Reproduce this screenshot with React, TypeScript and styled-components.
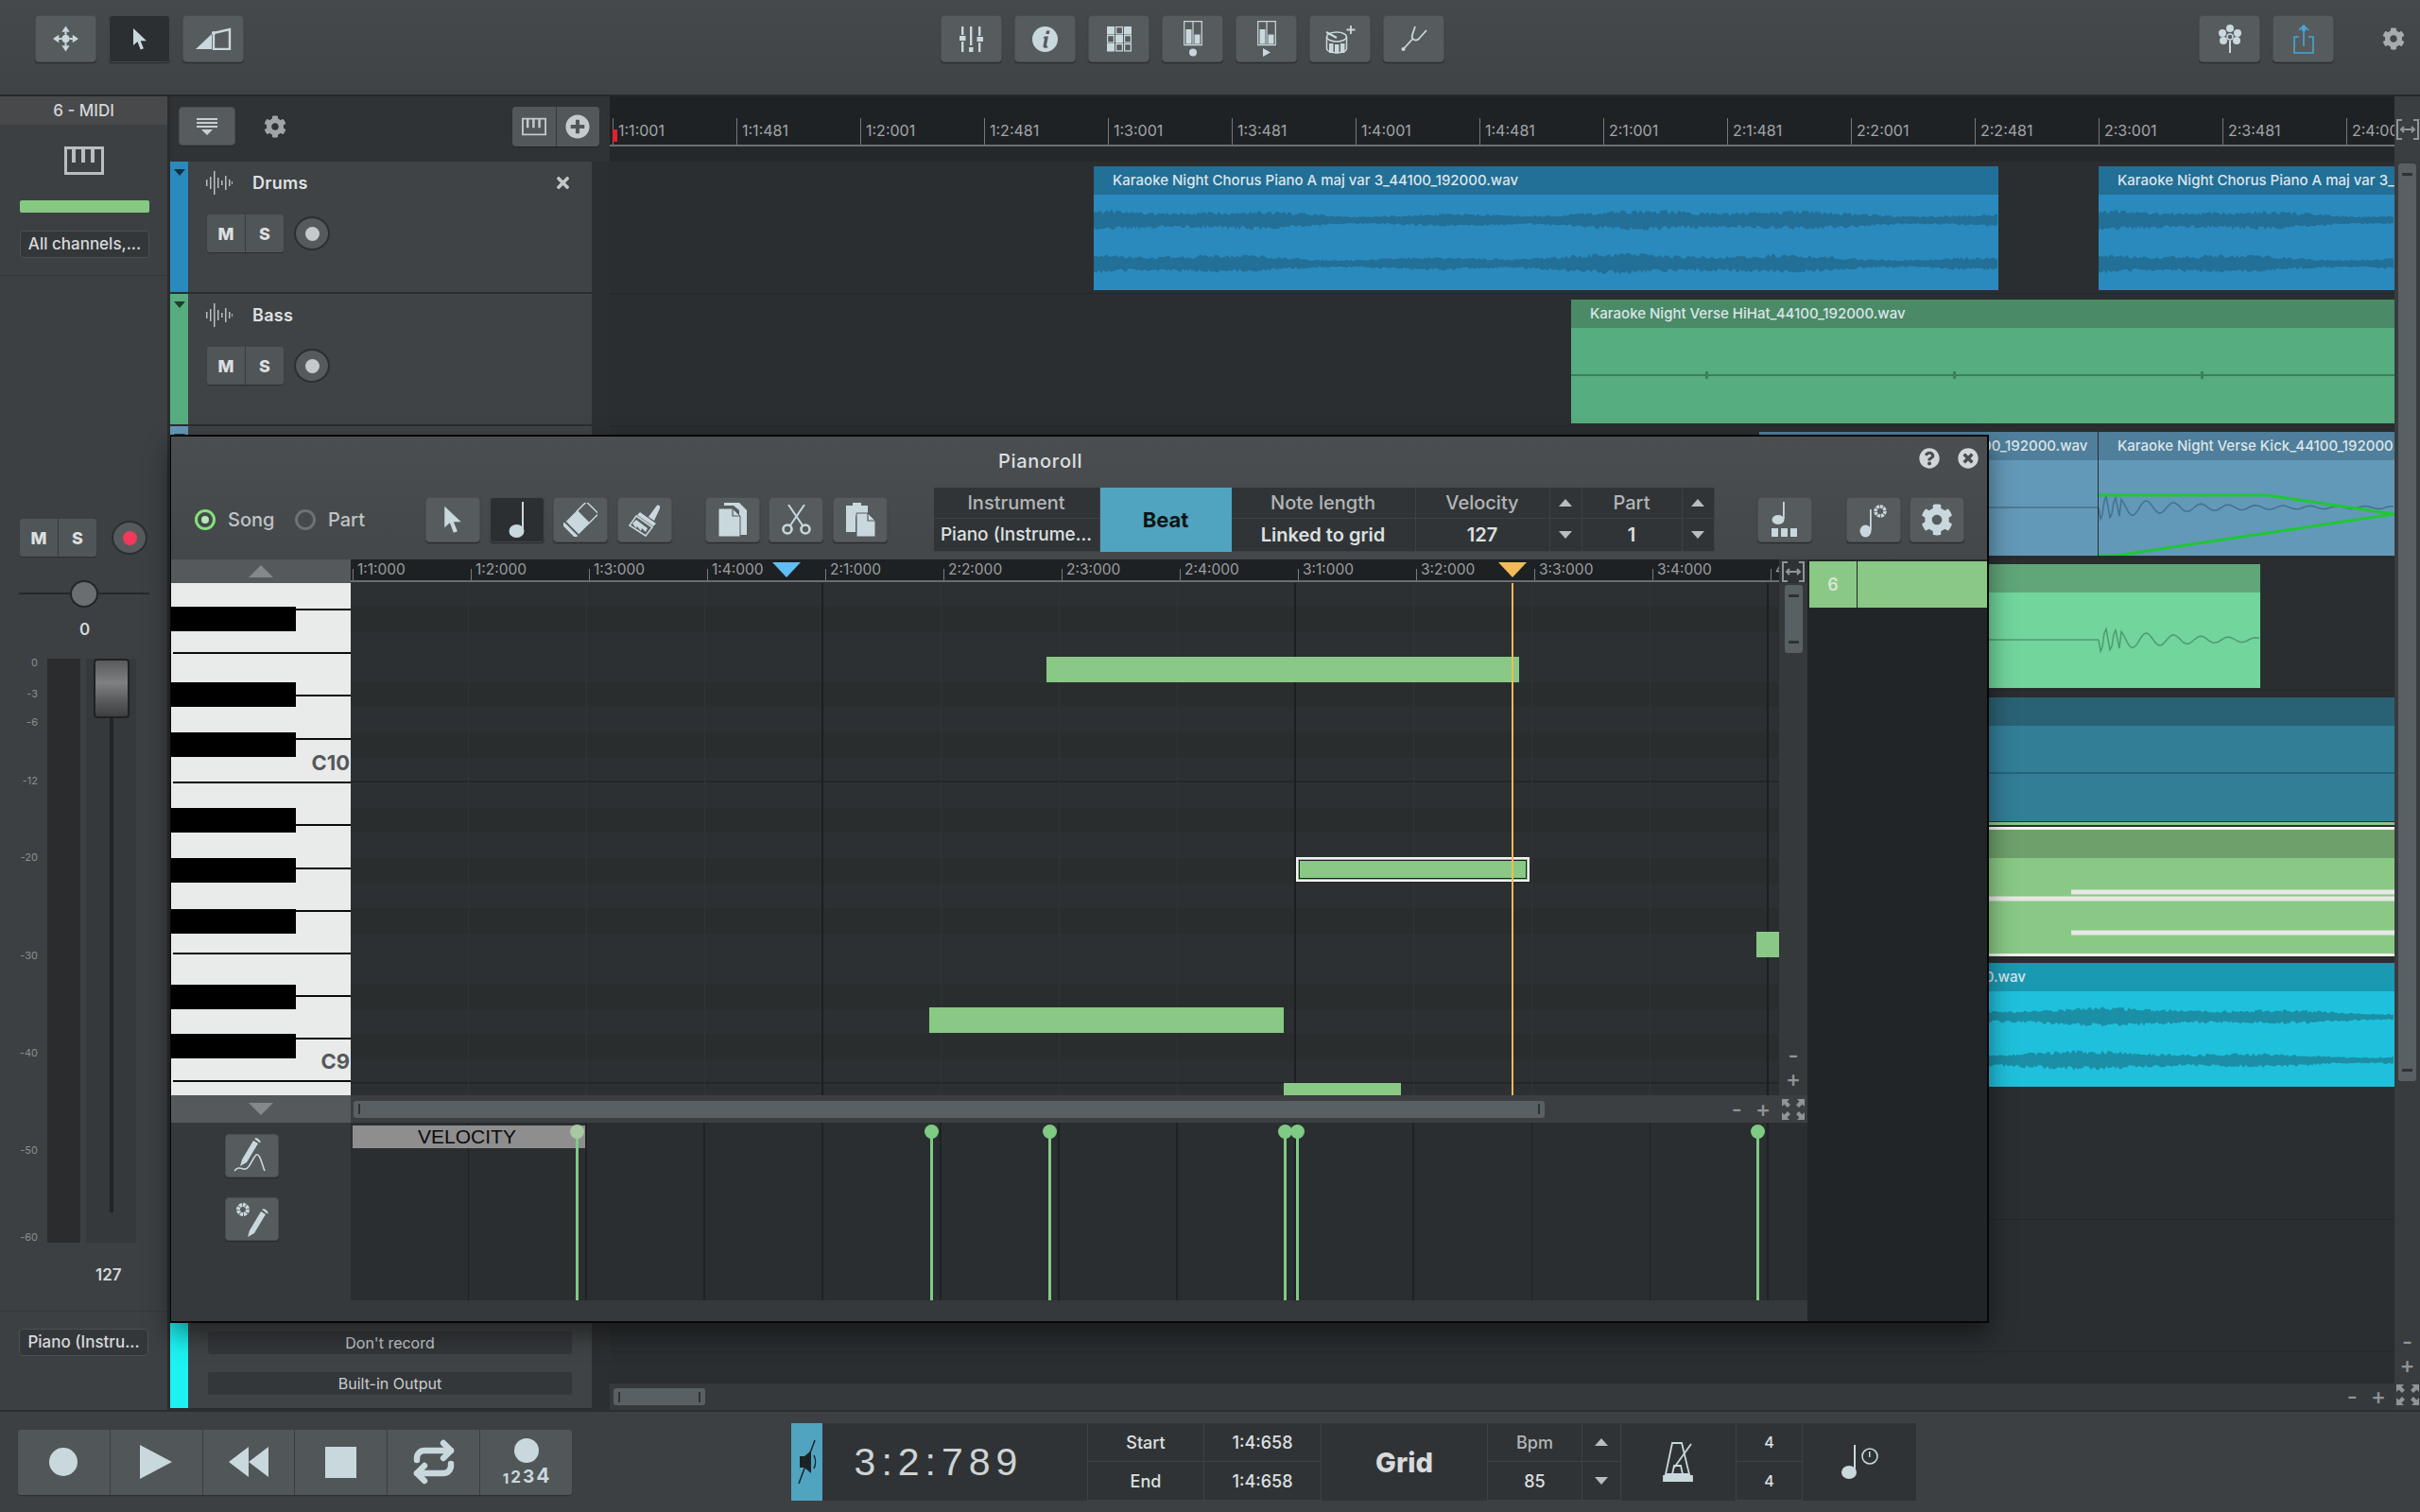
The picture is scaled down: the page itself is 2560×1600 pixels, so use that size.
import styled, { createGlobalStyle } from "styled-components";
import { FaCog, FaPlusCircle, FaQuestionCircle, FaTimes, FaTimesCircle } from "react-icons/fa";
import { Repeat } from "lucide-react";

const GlobalStyle = createGlobalStyle`
  html, body { margin: 0; padding: 0; background: #3c4042; }
  * { box-sizing: border-box; }
`;

const ICON = "#c9d8dd";

const Page = styled.div`
  width: 2560px;
  height: 1600px;
  position: relative;
  display: flex;
  flex-direction: column;
  overflow: hidden;
  background: #3c4042;
  font-family: Inter, "Open Sans", sans-serif;
  color: #d6d9da;
`;

/* ---------- top toolbar ---------- */
const TopBar = styled.div`
  height: 102px;
  flex: none;
  display: flex;
  align-items: flex-start;
  padding: 16px 0 0 37px;
  background: linear-gradient(#45494b, #3f4345);
  border-bottom: 2px solid #26292b;
`;
const ToolGroup = styled.div<{ $left?: number }>`
  display: flex;
  gap: 13px;
  margin-left: ${(p) => p.$left ?? 0}px;
`;
const ToolButton = styled.div<{ $active?: boolean; $w?: number; $h?: number }>`
  width: ${(p) => p.$w ?? 65}px;
  height: ${(p) => p.$h ?? 50}px;
  flex: none;
  display: flex;
  align-items: center;
  justify-content: center;
  border-radius: 4px;
  color: ${ICON};
  background: ${(p) => (p.$active ? "#2b2f31" : "#565b5d")};
  border: 1px solid ${(p) => (p.$active ? "#45494b" : "#4a4e50")};
  box-shadow: 0 1px 1px #26292b;
`;
const TopGear = styled.div`
  margin-left: 51px;
  margin-top: 13px;
  color: #a6abad;
  display: flex;
`;

/* ---------- middle ---------- */
const Middle = styled.div`
  flex: 1;
  display: flex;
  min-height: 0;
`;

const MidiStrip = styled.div`
  width: 180px;
  flex: none;
  display: flex;
  flex-direction: column;
  background: #3c4043;
  border-right: 3px solid #2a2d2f;
`;
const StripName = styled.div`
  height: 30px;
  flex: none;
  background: #47494b;
  font-size: 17px;
  font-weight: 500;
  line-height: 30px;
  text-align: center;
  color: #d4d6d7;
`;
const StripTop = styled.div`
  height: 160px;
  flex: none;
  display: flex;
  flex-direction: column;
  align-items: center;
  padding-top: 23px;
  border-bottom: 1px solid #35383a;
  color: #b9bfc1;
`;
const LevelBar = styled.div`
  width: 137px;
  height: 13px;
  margin-top: 27px;
  margin-left: 2px;
  border-radius: 2px;
  background: #86c982;
`;
const SelectBox = styled.div<{ $top?: number }>`
  width: 137px;
  height: 29px;
  margin-top: ${(p) => p.$top ?? 0}px;
  margin-left: 2px;
  flex: none;
  border: 1px solid #4c5052;
  border-radius: 4px;
  background: #34373a;
  font-size: 17px;
  font-weight: 500;
  line-height: 26px;
  text-align: center;
  white-space: nowrap;
  color: #d8dadb;
`;
const StripMixer = styled.div`
  flex: 1;
  display: flex;
  flex-direction: column;
  padding-top: 257px;
`;
const MixerButtons = styled.div`
  display: flex;
  align-items: center;
  padding-left: 21px;
  gap: 16px;
`;
const MsPair = styled.div<{ $w: number; $h: number }>`
  display: flex;
  flex: none;
  width: ${(p) => p.$w}px;
  height: ${(p) => p.$h}px;
  border-radius: 3px;
  overflow: hidden;
  background: #505557;
  box-shadow: 0 1px 1px #2b2e30;
`;
const MsKey = styled.div`
  flex: 1;
  display: flex;
  align-items: center;
  justify-content: center;
  font-size: 18px;
  font-weight: 800;
  color: #dcdfe0;
  & + & {
    border-left: 1px solid #393c3e;
  }
`;
const RecButton = styled.div<{ $on?: boolean }>`
  width: 38px;
  height: 36px;
  flex: none;
  border-radius: 50%;
  border: 2px solid #2c2f31;
  background: #565a5d;
  display: flex;
  align-items: center;
  justify-content: center;
  &::after {
    content: "";
    width: 15px;
    height: 15px;
    border-radius: 50%;
    background: ${(p) => (p.$on ? "#f0395c" : "#c5c9cb")};
  }
`;
const PanRow = styled.div`
  height: 2px;
  margin: 38px 19px 0 20px;
  background: #26292b;
  display: flex;
  justify-content: center;
  align-items: center;
`;
const PanKnob = styled.div`
  width: 30px;
  height: 29px;
  flex: none;
  border-radius: 50%;
  background: #6b6e70;
  border: 2px solid #232628;
`;
const StripValue = styled.div<{ $top: number; $left: number }>`
  margin-top: ${(p) => p.$top}px;
  padding-left: ${(p) => p.$left}px;
  font-size: 17px;
  font-weight: 600;
  color: #d6d9da;
`;
const FaderArea = styled.div`
  height: 618px;
  flex: none;
  margin-top: 21px;
  display: flex;
`;
const Scale = styled.div`
  width: 50px;
  position: relative;
  flex: none;
`;
const ScaleMark = styled.span<{ $y: number }>`
  position: absolute;
  right: 10px;
  top: ${(p) => p.$y}px;
  font-size: 11px;
  line-height: 12px;
  color: #8b8f91;
`;
const Meter = styled.div`
  width: 35px;
  background: #2a2c2e;
  flex: none;
`;
const FaderTrack = styled.div`
  width: 53px;
  margin-left: 6px;
  position: relative;
  flex: none;
  background: #36393b;
  display: flex;
  justify-content: center;
`;
const FaderRail = styled.div`
  width: 4px;
  height: 586px;
  background: #212426;
`;
const FaderKnob = styled.div`
  position: absolute;
  top: 0;
  left: 8px;
  width: 38px;
  height: 63px;
  border: 2px solid #1f2224;
  border-radius: 4px;
  background: linear-gradient(#585a5c, #7e8082 40%, #5b5d5f 70%, #3d3f41);
`;
const StripFoot = styled.div`
  height: 105px;
  flex: none;
  padding: 18px 0 0 18px;
  border-top: 1px solid #35383a;
`;

/* track headers */
const TrackColumn = styled.div`
  width: 465px;
  flex: none;
  display: flex;
  flex-direction: column;
  background: #2c2f31;
`;
const HeadTools = styled.div`
  height: 69px;
  flex: none;
  display: flex;
  align-items: center;
  padding: 0 11px 6px 9px;
  background: #303335;
  color: #9fa4a6;
`;
const HeadGear = styled.div`
  margin-left: 30px;
  display: flex;
`;
const Segmented = styled.div`
  margin-left: auto;
  display: flex;
  width: 92px;
  height: 42px;
  border-radius: 4px;
  overflow: hidden;
  background: #525759;
  color: #c4cbcd;
  box-shadow: 0 1px 1px #222527;
`;
const SegmentedCell = styled.div`
  flex: 1;
  display: flex;
  align-items: center;
  justify-content: center;
  & + & {
    border-left: 1px solid #34373a;
  }
`;
const TrackRow = styled.div<{ $h?: number }>`
  height: ${(p) => p.$h ?? 140}px;
  flex: ${(p) => (p.$h ? "none" : "1")};
  width: 446px;
  display: flex;
  border-bottom: 2px solid #2a2d2f;
`;
const Stripe = styled.div<{ $color: string }>`
  width: 19px;
  flex: none;
  background: ${(p) => p.$color};
  display: flex;
  justify-content: center;
  padding-top: 8px;
  &::before {
    content: "";
    width: 0;
    height: 0;
    border-left: 6px solid transparent;
    border-right: 6px solid transparent;
    border-top: 7px solid rgba(0, 0, 0, 0.65);
  }
`;
const TrackBody = styled.div`
  flex: 1;
  background: #3f4345;
  padding: 10px 0 0 19px;
  display: flex;
  flex-direction: column;
`;
const TrackTitle = styled.div`
  height: 24px;
  display: flex;
  align-items: center;
  color: #b9bdbf;
`;
const TrackName = styled.div`
  margin-left: 21px;
  font-size: 18px;
  font-weight: 600;
  letter-spacing: 0.3px;
  color: #dfe1e2;
`;
const TrackClose = styled.div`
  margin-left: auto;
  margin-right: 21px;
  display: flex;
  color: #c3c7c8;
`;
const TrackControls = styled.div`
  display: flex;
  align-items: center;
  gap: 11px;
  margin: 22px 0 0 1px;
`;
const LastTrackBody = styled.div`
  flex: 1;
  background: #3f4345;
  padding: 0 21px 14px;
  display: flex;
  flex-direction: column;
  justify-content: flex-end;
  gap: 19px;
`;
const RouteBox = styled.div`
  height: 24px;
  border-radius: 3px;
  background: #34373a;
  font-size: 16px;
  line-height: 24px;
  text-align: center;
  color: #c9cccd;
`;

/* timeline */
const TimelineColumn = styled.div`
  width: 1888px;
  flex: none;
  display: flex;
  flex-direction: column;
`;
const Ruler = styled.div`
  height: 69px;
  flex: none;
  position: relative;
  background: linear-gradient(#1f2225 0 51px, #6d7072 51px 53px, #25282a 53px);
  overflow: hidden;
`;
const RulerTick = styled.div<{ $x: number }>`
  position: absolute;
  left: ${(p) => p.$x}px;
  top: 23px;
  height: 28px;
  width: 1px;
  background: #74787a;
`;
const RulerLabel = styled.span`
  position: absolute;
  left: 6px;
  top: 4px;
  font-size: 16px;
  line-height: 18px;
  white-space: nowrap;
  color: #a2a6a8;
`;
const PlayMark = styled.div`
  position: absolute;
  left: 3px;
  top: 35px;
  width: 5px;
  height: 13px;
  background: #e4202c;
`;
const Lanes = styled.div`
  flex: 1;
  position: relative;
  overflow: hidden;
  background: repeating-linear-gradient(#2a2e30 0 139px, #25282a 139px 140px);
`;
const Clip = styled.div<{ $x: number; $y: number; $w: number; $h?: number; $body: string }>`
  position: absolute;
  left: ${(p) => p.$x}px;
  top: ${(p) => p.$y}px;
  width: ${(p) => p.$w}px;
  height: ${(p) => p.$h ?? 131}px;
  display: flex;
  flex-direction: column;
  overflow: hidden;
  background: ${(p) => p.$body};
`;
const ClipHead = styled.div<{ $color: string; $pad?: number }>`
  height: 30px;
  flex: none;
  padding-left: ${(p) => p.$pad ?? 20}px;
  background: ${(p) => p.$color};
  font-size: 15px;
  font-weight: 500;
  line-height: 29px;
  white-space: nowrap;
  color: #dbe5ea;
`;
const ClipEdge = styled.div`
  height: 8px;
  flex: none;
  background: linear-gradient(#89c985 0 3px, #2a2e30 3px 5px, #f4f5f3 5px);
`;
const ClipArt = styled.svg`
  flex: 1;
  display: block;
  width: 100%;
`;
const HScroll = styled.div`
  height: 29px;
  flex: none;
  display: flex;
  align-items: center;
  padding: 0 9px 0 4px;
  background: #35393b;
  border-top: 1px solid #282b2d;
  color: #8f9496;
`;
const HThumb = styled.div<{ $w: number }>`
  width: ${(p) => p.$w}px;
  height: 18px;
  flex: none;
  display: flex;
  justify-content: space-between;
  align-items: center;
  padding: 0 5px;
  border-radius: 3px;
  background: #596063;
  &::before,
  &::after {
    content: "";
    width: 2px;
    height: 11px;
    background: #2f3234;
  }
`;
const ZoomMarks = styled.div`
  margin-left: auto;
  display: flex;
  align-items: center;
  gap: 14px;
  font-size: 24px;
  font-weight: 500;
  line-height: 24px;
`;
const VScrollColumn = styled.div`
  flex: 1;
  display: flex;
  flex-direction: column;
  align-items: center;
  background: #383c3e;
  color: #8f9496;
`;
const VExpand = styled.div`
  height: 69px;
  flex: none;
  padding-top: 24px;
  display: flex;
  background: #3a3e40;
  width: 100%;
  justify-content: center;
`;
const VThumb = styled.div<{ $h: number }>`
  width: 19px;
  height: ${(p) => p.$h}px;
  flex: none;
  display: flex;
  flex-direction: column;
  justify-content: space-between;
  align-items: center;
  padding: 10px 0;
  margin-top: 2px;
  border-radius: 3px;
  background: #596063;
  &::before,
  &::after {
    content: "";
    width: 11px;
    height: 3px;
    background: #2f3234;
  }
`;
const VMarks = styled.div`
  margin-top: 265px;
  display: flex;
  flex-direction: column;
  align-items: center;
  gap: 3px;
  font-size: 24px;
  font-weight: 500;
  line-height: 22px;
`;
const VFit = styled.div`
  display: flex;
  margin-top: 6px;
`;

/* ---------- pianoroll window ---------- */
const PianoWindow = styled.div`
  position: absolute;
  left: 180px;
  top: 460px;
  width: 1924px;
  height: 940px;
  display: flex;
  flex-direction: column;
  background: #34383a;
  border: solid #060708;
  border-width: 2px 2px 2px 1px;
  box-shadow: 0 12px 26px rgba(0, 0, 0, 0.45);
`;
const WinHead = styled.div`
  height: 130px;
  flex: none;
  background: linear-gradient(#4a4e50, #43474a);
`;
const TitleRow = styled.div`
  height: 53px;
  display: flex;
  align-items: center;
  padding: 0 9px 2px 875px;
  color: #d2d6d8;
`;
const WinTitle = styled.div`
  font-size: 20px;
  font-weight: 500;
  letter-spacing: 0.7px;
  color: #dcdfe0;
`;
const WinHelp = styled.div`
  margin-left: auto;
  display: flex;
  gap: 19px;
  margin-top: -5px;
`;
const WinTools = styled.div`
  display: flex;
  align-items: center;
  height: 77px;
  padding: 0 0 8px 25px;
`;
const Radio = styled.div<{ $on?: boolean }>`
  width: 22px;
  height: 22px;
  flex: none;
  border-radius: 50%;
  border: 3px solid ${(p) => (p.$on ? "#84e27a" : "#6e7274")};
  display: flex;
  align-items: center;
  justify-content: center;
  &::after {
    content: "";
    width: 8px;
    height: 8px;
    border-radius: 50%;
    background: ${(p) => (p.$on ? "#b8e8ba" : "transparent")};
  }
`;
const RadioLabel = styled.div<{ $w: number }>`
  width: ${(p) => p.$w}px;
  padding-left: 13px;
  font-size: 20px;
  font-weight: 500;
  color: #bfc3c5;
`;
const WinToolGroup = styled.div<{ $left?: number; $gap?: number }>`
  display: flex;
  gap: ${(p) => p.$gap ?? 9.5}px;
  margin-left: ${(p) => p.$left ?? 0}px;
`;
const InfoTable = styled.div`
  margin-left: 49px;
  display: grid;
  grid-template-columns: 176px 139px 195px 142px 34px 106px 34px;
  grid-template-rows: 33px 35px;
  background: #313436;
`;
const InfoCell = styled.div<{ $dim?: boolean; $size?: number; $weight?: number }>`
  display: flex;
  align-items: center;
  justify-content: center;
  white-space: nowrap;
  overflow: hidden;
  font-size: ${(p) => p.$size ?? 20}px;
  font-weight: ${(p) => p.$weight ?? 500};
  color: ${(p) => (p.$dim ? "#b2b6b8" : "#dde0e1")};
  border-right: 1px solid #3e4244;
  border-bottom: 1px solid #3e4244;
`;
const BeatCell = styled.div`
  grid-row: 1 / span 2;
  grid-column: 2;
  display: flex;
  align-items: center;
  justify-content: center;
  background: #50a4bf;
  font-size: 22px;
  font-weight: 700;
  color: #0d1416;
`;
const Arrow = styled.div<{ $down?: boolean; $size?: number; $color?: string }>`
  width: 0;
  height: 0;
  border-left: ${(p) => p.$size ?? 7}px solid transparent;
  border-right: ${(p) => p.$size ?? 7}px solid transparent;
  ${(p) => (p.$down ? "border-top" : "border-bottom")}: ${(p) => p.$size ?? 8}px solid ${(p) => p.$color ?? "#b9bdbf"};
`;
const WinBody = styled.div`
  flex: 1;
  display: flex;
  min-height: 0;
`;
const WinMain = styled.div`
  width: 1731px;
  flex: none;
  display: flex;
  flex-direction: column;
`;
const RollRow = styled.div`
  height: 596px;
  flex: none;
  display: flex;
`;
const KeysColumn = styled.div`
  width: 190px;
  flex: none;
  display: flex;
  flex-direction: column;
`;
const KeyArrow = styled.div<{ $h: number }>`
  height: ${(p) => p.$h}px;
  flex: none;
  display: flex;
  align-items: center;
  justify-content: center;
  background: #55595b;
`;
const Keys = styled.div`
  height: 542px;
  flex: none;
  position: relative;
  overflow: hidden;
  background: #e9eaea;
`;
const WhiteKey = styled.div<{ $h: number }>`
  height: ${(p) => p.$h}px;
  margin-left: 2px;
  border-bottom: 2px solid #0b0b0b;
`;
const BlackKey = styled.div<{ $y: number }>`
  position: absolute;
  left: 0;
  top: ${(p) => p.$y}px;
  width: 132px;
  height: 26px;
  background: #000;
`;
const OctaveName = styled.div<{ $y: number }>`
  position: absolute;
  right: 1px;
  top: ${(p) => p.$y}px;
  font-size: 22px;
  font-weight: 700;
  line-height: 24px;
  color: #55585a;
`;
const GridColumn = styled.div`
  flex: 1;
  display: flex;
  flex-direction: column;
  min-width: 0;
`;
const WinRuler = styled.div`
  height: 25px;
  flex: none;
  position: relative;
  overflow: hidden;
  background: linear-gradient(#1e2123 0 22px, #6a6e70 22px 24px, #2a2e30 24px);
`;
const WinTick = styled.div<{ $x: number }>`
  position: absolute;
  left: ${(p) => p.$x}px;
  top: 10px;
  height: 12px;
  width: 1px;
  background: #777b7d;
`;
const WinTickLabel = styled.span`
  position: absolute;
  left: 5px;
  top: -8px;
  font-size: 15.5px;
  line-height: 18px;
  white-space: nowrap;
  color: #9a9ea0;
`;
const Marker = styled.div<{ $x: number; $color: string }>`
  position: absolute;
  left: ${(p) => p.$x - 15}px;
  top: 3px;
  width: 0;
  height: 0;
  border-left: 15px solid transparent;
  border-right: 15px solid transparent;
  border-top: 16px solid ${(p) => p.$color};
`;
const RollGrid = styled.div`
  height: 542px;
  flex: none;
  position: relative;
  overflow: hidden;
  display: flex;
  flex-direction: column;
`;
const RollLanes = styled.div`
  margin-top: -1.6px;
`;
const RollLane = styled.div<{ $dark?: boolean; $line?: boolean }>`
  height: 26.6px;
  background: ${(p) => (p.$dark ? "#292d2e" : "#2c3032")};
  ${(p) => p.$line && "border-bottom: 2px solid #232628;"}
`;
const BeatLines = styled.div`
  position: absolute;
  inset: 0;
  background-image: repeating-linear-gradient(90deg, transparent 0 498px, #1c1f21 498px 500px),
    repeating-linear-gradient(90deg, transparent 0 124px, #303436 124px 125px);
`;
const Note = styled.div<{ $x: number; $y: number; $w: number; $h?: number; $sel?: boolean }>`
  position: absolute;
  left: ${(p) => p.$x}px;
  top: ${(p) => p.$y}px;
  width: ${(p) => p.$w}px;
  height: ${(p) => p.$h ?? 27}px;
  background: #89c985;
  ${(p) => p.$sel && "border: 2px solid #f2f4f2; outline: 1px solid #1d2022; outline-offset: -4px;"}
`;
const PlayLine = styled.div<{ $x: number }>`
  position: absolute;
  left: ${(p) => p.$x}px;
  top: 0;
  bottom: 0;
  width: 2px;
  background: #f1bb57;
`;
const RollBar = styled.div`
  height: 29px;
  flex: none;
  display: flex;
  align-items: center;
  padding: 0 9px 0 3px;
  background: #3b3f41;
  color: #8f9496;
`;
const RollScroll = styled.div`
  width: 30px;
  flex: none;
  display: flex;
  flex-direction: column;
  align-items: center;
  background: #35393b;
  color: #8f9496;
`;
const RollExpand = styled.div<{ $h: number; $bg?: string }>`
  height: ${(p) => p.$h}px;
  width: 100%;
  flex: none;
  display: flex;
  align-items: center;
  justify-content: center;
  background: ${(p) => p.$bg ?? "#2e3234"};
`;
const RollScrollBody = styled.div`
  height: 542px;
  flex: none;
  display: flex;
  flex-direction: column;
  align-items: center;
`;
const RollMarks = styled.div`
  margin-top: auto;
  margin-bottom: 6px;
  display: flex;
  flex-direction: column;
  align-items: center;
  gap: 3px;
  font-size: 24px;
  font-weight: 500;
  line-height: 22px;
`;
const VelRow = styled.div`
  height: 188px;
  flex: none;
  display: flex;
`;
const VelTools = styled.div`
  width: 190px;
  flex: none;
  display: flex;
  flex-direction: column;
  gap: 21px;
  padding: 12px 0 0 57px;
  background: #36393b;
`;
const VelLane = styled.div`
  flex: 1;
  position: relative;
  overflow: hidden;
  background-color: #2a2e30;
  background-image: repeating-linear-gradient(90deg, transparent 0 123.5px, #1f2224 123.5px 125px);
`;
const VelLabel = styled.div`
  position: absolute;
  left: 2px;
  top: 3px;
  width: 246px;
  height: 24px;
  background: #8e8e8e;
  font-family: "Liberation Sans", Arial, sans-serif;
  font-size: 21px;
  line-height: 24px;
  text-align: center;
  padding-right: 4px;
  color: #0b0b0b;
`;
const VelStem = styled.div<{ $x: number; $fade?: boolean }>`
  position: absolute;
  left: ${(p) => p.$x}px;
  top: 3px;
  bottom: 0;
  width: 3px;
  background: #7fcb83;
  &::before {
    content: "";
    position: absolute;
    left: -6px;
    top: -1px;
    width: 15px;
    height: 15px;
    border-radius: 50%;
    background: ${(p) => (p.$fade ? "#a8c8a4" : "#7fcb83")};
  }
`;
const WinFoot = styled.div`
  flex: 1;
  background: #35393b;
`;
const SidePanel = styled.div`
  flex: 1;
  background: #212527;
  padding-top: 2px;
`;
const PartLane = styled.div`
  height: 49px;
  display: flex;
  gap: 1px;
  padding-left: 2px;
`;
const PartNumber = styled.div`
  width: 50px;
  background: #89c985;
  display: flex;
  align-items: center;
  justify-content: center;
  font-size: 18px;
  font-weight: 600;
  color: #d6e5d6;
`;
const PartFill = styled.div`
  flex: 1;
  background: #89c985;
`;

/* ---------- transport ---------- */
const Transport = styled.div`
  height: 108px;
  flex: none;
  display: flex;
  align-items: center;
  padding-left: 19px;
  background: #3c4042;
  border-top: 2px solid #2b2e30;
`;
const TransportButtons = styled.div`
  display: flex;
  width: 586px;
  height: 69px;
  background: #515658;
  border-radius: 3px;
  overflow: hidden;
  box-shadow: 0 1px 1px #2c2f31;
  color: ${ICON};
`;
const TransportKey = styled.div`
  flex: 1;
  display: flex;
  flex-direction: column;
  align-items: center;
  justify-content: center;
  & + & {
    border-left: 1px solid #3a3d3f;
  }
`;
const BeatDigits = styled.div`
  display: flex;
  align-items: flex-end;
  font-weight: 700;
  line-height: 1;
  margin-top: 3px;
`;
const BeatDigit = styled.span<{ $size: number }>`
  font-size: ${(p) => p.$size}px;
  padding: 0 1px;
`;
const Display = styled.div`
  margin-left: 232px;
  display: grid;
  grid-auto-flow: column;
  grid-template-columns: 33px 281px 123px 124px 176px 100px 41px 122px 70px 121px;
  grid-template-rows: 41px 41px;
  background: #303335;
`;
const MuteCell = styled.div`
  grid-row: span 2;
  background: #50a4bf;
  display: flex;
  align-items: center;
  justify-content: center;
  color: #1b2326;
`;
const TimeCell = styled.div`
  grid-row: span 2;
  display: flex;
  align-items: center;
  justify-content: center;
  padding-right: 34px;
  font-family: "Liberation Sans", Arial, sans-serif;
  font-size: 41px;
  letter-spacing: 6px;
  color: #cfd3d4;
  border-right: 1px solid #3e4244;
`;
const TallCell = styled.div<{ $big?: boolean }>`
  grid-row: span 2;
  display: flex;
  align-items: center;
  justify-content: center;
  font-size: ${(p) => (p.$big ? 29 : 18)}px;
  font-weight: 800;
  color: ${(p) => (p.$big ? "#d8dadb" : ICON)};
  border-right: 1px solid #3e4244;
`;

/* ---------- icons ---------- */
const MoveIcon = () => (
  <svg width="27" height="28" viewBox="0 0 26 26" fill="currentColor">
    <path d="M13 0l4 6H9zM13 26l-4-6h8zM0 13l6-4v8zM26 13l-6 4V9z" />
    <circle cx="13" cy="13" r="4" />
    <path d="M12 6h2v3h-2zM12 17h2v3h-2zM6 12h3v2H6zM17 12h3v2h-3z" />
  </svg>
);
const CursorIcon = ({ w = 16, h = 23 }: { w?: number; h?: number }) => (
  <svg width={w} height={h} viewBox="0 0 16 23" fill="currentColor">
    <path d="M1 0v18l4.500-4 3.200 8.500 3.200-1.300-3.200-8H15z" />
  </svg>
);
const FadeIcon = () => (
  <svg width="38" height="24" viewBox="0 0 38 24" fill="currentColor">
    <path d="M0 23L17 7v16z" />
    <path d="M19 6l17-4v21H19z" fill="none" stroke="currentColor" strokeWidth="2.4" />
    <circle cx="19" cy="6" r="2" />
  </svg>
);
const KeyboardIcon = ({ w = 42, h = 30 }: { w?: number; h?: number }) => (
  <svg width={w} height={h} viewBox="0 0 42 30" fill="currentColor">
    <path d="M1.500 1.500h39v27h-39z" fill="none" stroke="currentColor" strokeWidth="3" />
    <path d="M8 2h4v15H8zM18 2h4v15h-4zM28 2h4v15h-4z" />
  </svg>
);
const ListIcon = () => (
  <svg width="22" height="18" viewBox="0 0 22 18" fill="#c6cfd2">
    <path d="M0 0h22v2H0zM0 4h22v2H0zM0 8h22v2H0zM5 12h12l-6 6z" />
  </svg>
);
const WaveIcon = () => (
  <svg width="28" height="25" viewBox="0 0 28 25" fill="currentColor">
    <path d="M0 9h1.500v7H0zM4 6h1.500v13H4zM8 0h1.500v25H8zM12 7h1.500v11H12zM16 10h1.500v5H16zM20 5h1.500v15H20zM24 9h1.500v7H24zM27 11h1v3h-1z" />
  </svg>
);
const MixerIcon = () => (
  <svg width="25" height="27" viewBox="0 0 25 27" fill="currentColor">
    <path d="M2 0h2.400v9H2zM0 10h6.500v5H0zM2 16h2.400v11H2zM11 0h2.400v20H11zM10 22h4.500v5H10zM20 0h2.400v10H20zM18.500 11H25v5h-6.500zM20 17h2.400v10H20z" />
  </svg>
);
const InfoIcon = () => (
  <svg width="27" height="27" viewBox="0 0 27 27">
    <circle cx="13.500" cy="13.500" r="13.500" fill="currentColor" />
    <path d="M15 4.500h3.500l-.7 3.500h-3.500zM13 10.500h4l-2 9.500c-.1.800.5 1 1.500.6l-.3 1.600c-1.800 1.100-5 1-4.700-1.700l1.500-7.800-1.700-.3z" fill="#565b5d" />
  </svg>
);
const PadCell = ({ x, y, solid }: { x: number; y: number; solid?: boolean }) =>
  solid ? (
    <rect x={x} y={y} width="8" height="8.500" fill="currentColor" />
  ) : (
    <rect x={x + 0.6} y={y + 0.6} width="6.800" height="7.300" fill="none" stroke="currentColor" strokeWidth="1.200" />
  );
const PadsIcon = () => (
  <svg width="26" height="27" viewBox="0 0 26 27">
    <PadCell x={0} y={0} solid />
    <PadCell x={9} y={0} />
    <PadCell x={18} y={0} solid />
    <PadCell x={0} y={9} />
    <PadCell x={9} y={9} solid />
    <PadCell x={18} y={9} />
    <PadCell x={0} y={18} solid />
    <PadCell x={9} y={18} />
    <PadCell x={18} y={18} />
  </svg>
);
const BarsIcon = ({ play }: { play?: boolean }) => (
  <svg width="20" height="38" viewBox="0 0 20 38" fill="currentColor">
    <path d="M.7.700h18.600v25H.700zM10 1v25" fill="none" stroke="currentColor" strokeWidth="1.200" />
    <path d="M2.500 9h6v15.500h-6zM11.500 14.500h6v10h-6z" />
    {play ? <path d="M6 29l8 4.500-8 4.500z" /> : <circle cx="10" cy="33.500" r="4" />}
  </svg>
);
const DrumIcon = () => (
  <svg width="32" height="31" viewBox="0 0 32 31" fill="none" stroke="currentColor" strokeWidth="1.500">
    <ellipse cx="12" cy="13" rx="10.500" ry="5" />
    <path d="M1.500 13v13c2 5 19 5 21 0V13" />
    <path d="M4 20h4.500v10H4zM10 21h4.500v9.500H10zM16 20h4.500v10H16z" fill="currentColor" stroke="none" />
    <path d="M1 8l11 6" strokeWidth="2" />
    <path d="M27 1v9M22.500 5.500h9" strokeWidth="1.800" />
  </svg>
);
const ForkIcon = () => (
  <svg width="28" height="28" viewBox="0 0 28 28" fill="none" stroke="currentColor" strokeWidth="1.800">
    <path d="M2 25.500l10-11" />
    <path d="M15 1l-3 9c-1.500 5 4 7 7 4l8-9" />
    <circle cx="2.500" cy="25" r="2" fill="currentColor" stroke="none" />
  </svg>
);
const FlowerIcon = () => (
  <svg width="30" height="30" viewBox="0 0 30 30" fill="currentColor">
    <circle cx="15" cy="4" r="4" />
    <circle cx="7" cy="9" r="4" />
    <circle cx="23" cy="9" r="4" />
    <circle cx="8" cy="17" r="4" />
    <circle cx="22" cy="17" r="4" />
    <circle cx="15" cy="13" r="3" fill="none" stroke="currentColor" strokeWidth="1.500" />
    <path d="M14 17h2v13h-2z" />
  </svg>
);
const ShareIcon = () => (
  <svg width="22" height="31" viewBox="0 0 22 31" fill="none" stroke="#47a6d8" strokeWidth="1.600">
    <path d="M6 13H1v17h20V13h-5" />
    <path d="M11 23V1M6 6l5-5 5 5" />
    <path d="M9 3h4v4H9z" fill="#47a6d8" stroke="none" />
  </svg>
);
const ExpandIcon = () => (
  <svg width="24" height="22" viewBox="0 0 24 22" fill="none" stroke="currentColor" strokeWidth="2">
    <path d="M6 1H1v20h5M18 1h5v20h-5M5 11h14M8 8l-3 3 3 3M16 8l3 3-3 3" />
  </svg>
);
const FitIcon = () => (
  <svg width="24" height="22" viewBox="0 0 24 22" fill="currentColor">
    <path d="M0 0h8L5.500 2.500 9 6 6 9 2.500 5.500 0 8zM24 0v8l-2.500-2.500L18 9l-3-3 3.500-3.500L16 0zM0 22v-8l2.500 2.500L6 13l3 3-3.500 3.500L8 22zM24 22h-8l2.500-2.500L15 16l3-3 3.500 3.500L24 14z" />
  </svg>
);
const EraserIcon = () => (
  <svg width="36" height="36" viewBox="0 0 36 36" fill="currentColor">
    <g transform="rotate(45 18 18)">
      <path d="M9 0h18v14H9z" fill="none" stroke="currentColor" strokeWidth="1.500" />
      <path d="M8.500 14h19v16h-19z" />
      <path d="M8 32h20v3.500H8z" />
    </g>
  </svg>
);
const BrushIcon = () => (
  <svg width="34" height="36" viewBox="0 0 34 36" fill="currentColor">
    <path d="M21 15l8-11c2-3 5-1 4 2l-6 13z" />
    <path d="M12 10l17 12-3 3L9 13z" />
    <path d="M8 14l17 12-7 9L1 24z" fill="none" stroke="currentColor" strokeWidth="1.600" />
    <path d="M8 18l12 9-2 4-4-4-1 3-4-5-1 2-4-5z" />
  </svg>
);
const CopyIcon = () => (
  <svg width="32" height="36" viewBox="0 0 32 36" fill="currentColor">
    <path d="M7 0h16l8 8v26h-8V8L17 3H7z" />
    <path d="M1 6h15l8 8v22H1z" stroke="#565b5d" strokeWidth="1" />
    <path d="M16 6v8h8" fill="none" stroke="#565b5d" strokeWidth="1.200" />
  </svg>
);
const ScissorsIcon = () => (
  <svg width="33" height="32" viewBox="0 0 33 32" fill="none" stroke="currentColor">
    <circle cx="7" cy="26" r="4.500" strokeWidth="2.600" />
    <circle cx="26" cy="26" r="4.500" strokeWidth="2.600" />
    <path d="M10 22L25 0M23 22L8 0" strokeWidth="2" />
  </svg>
);
const PasteIcon = () => (
  <svg width="34" height="38" viewBox="0 0 34 38" fill="currentColor">
    <path d="M2 4h7V1h9v3h7v8h-6c-5 0-7 2-7 6v14H2z" />
    <path d="M13 12h12l8 8v17H13z" stroke="#565b5d" strokeWidth="1" />
    <path d="M25 12v8h8" fill="none" stroke="#565b5d" strokeWidth="1.200" />
  </svg>
);
const NoteIcon = ({ h = 38 }: { h?: number }) => (
  <svg width="18" height={h} viewBox="0 0 18 38" fill="currentColor">
    <path d="M14 0h2v30h-2z" />
    <ellipse cx="8.500" cy="31" rx="8" ry="7" />
  </svg>
);
const NoteDotsIcon = () => (
  <svg width="30" height="38" viewBox="0 0 30 38" fill="currentColor">
    <path d="M13 0h1.800v18H13z" />
    <ellipse cx="8" cy="19" rx="6.500" ry="5" />
    <path d="M1 28h7v9H1zM11 28h7v9h-7zM21 28h7v9h-7z" />
  </svg>
);
const NoteGearIcon = () => (
  <svg width="30" height="38" viewBox="0 0 30 38" fill="currentColor">
    <path d="M11 8h1.800v22H11z" />
    <ellipse cx="6.500" cy="31" rx="6" ry="6.500" />
    <circle cx="22" cy="10" r="5" fill="none" stroke="currentColor" strokeWidth="3.500" strokeDasharray="3 0.800" />
  </svg>
);
const PencilGlyph = () => <path d="M1 30l2-7L15 3l5 3L8 26zM16 1c1-1 3-1 4 0l2 2c1 1 .5 2 0 2.500z" />;
const PencilCurveIcon = () => (
  <svg width="40" height="38" viewBox="0 0 40 38" fill="currentColor">
    <g transform="translate(6 0)">
      <PencilGlyph />
    </g>
    <path d="M1 35c5-6 8-1 12-2 5-2 6-10 11-15 4-2 6 10 9 17" fill="none" stroke="currentColor" strokeWidth="1.600" />
  </svg>
);
const GearPencilIcon = () => (
  <svg width="40" height="38" viewBox="0 0 40 38" fill="currentColor">
    <g transform="translate(14 8)">
      <PencilGlyph />
    </g>
    <circle cx="10" cy="9" r="5" fill="none" stroke="currentColor" strokeWidth="4" strokeDasharray="3 0.800" />
  </svg>
);
const MuteIcon = () => (
  <svg width="24" height="46" viewBox="0 0 24 46" fill="currentColor">
    <path d="M4 17h5l7-6v24l-7-6H4z" />
    <path d="M19 16c2 4 2 10 0 14" fill="none" stroke="currentColor" strokeWidth="1.500" />
    <path d="M20 0L3 46" stroke="currentColor" strokeWidth="1.500" />
  </svg>
);
const MetronomeIcon = () => (
  <svg width="42" height="42" viewBox="0 0 42 42" fill="none" stroke={ICON} strokeWidth="1.800">
    <path d="M14 1h10l8 33H7z" />
    <path d="M5 36h30v5H5z" fill={ICON} />
    <path d="M34 2L16 27" />
    <path d="M16 25h7l2 9H14z" />
  </svg>
);
const NoteClockIcon = () => (
  <svg width="40" height="36" viewBox="0 0 40 36" fill={ICON}>
    <path d="M14 0h2v28h-2z" />
    <ellipse cx="9" cy="29" rx="8" ry="7" />
    <circle cx="31" cy="12" r="8" fill="none" stroke={ICON} strokeWidth="1.600" />
    <path d="M30 7h1.500v6H30z" />
  </svg>
);

/* ---------- waveforms ---------- */
const noise = (x: number, seed: number) => {
  const v = Math.sin(x * 12.9898 + seed * 78.233) * 43758.5453;
  return v - Math.floor(v);
};

const wavePath = (width: number, cy: number, amp: number, seed: number) => {
  const top: string[] = [];
  const bottom: string[] = [];
  for (let x = 0; x <= width; x += 2) {
    const env = 0.66 + 0.2 * Math.sin(x / 95 + seed) + 0.14 * Math.sin(x / 31 + seed * 2);
    top.push(`${x},${(cy - amp * env * (0.55 + 0.45 * noise(x, seed))).toFixed(1)}`);
    bottom.unshift(`${x},${(cy + amp * env * (0.55 + 0.45 * noise(x + 1, seed))).toFixed(1)}`);
  }
  return `M${top.join("L")}L${bottom.join("L")}Z`;
};

const decayPath = (start: number, width: number, cy: number, amp: number) => {
  const pts: string[] = [];
  for (let x = 0; x + start <= width; x += 2) {
    const a = amp * Math.exp(-x / 70) + 1.2;
    pts.push(`${x + start},${(cy + a * Math.sin(x / (x < 24 ? 1.6 : 4.6))).toFixed(1)}`);
  }
  return `M${pts.join("L")}`;
};

const StereoWave = ({ w, amp, color, seed }: { w: number; amp: number; color: string; seed: number }) => (
  <ClipArt viewBox={`0 0 ${w} 101`} preserveAspectRatio="none">
    <path d={wavePath(w, 27, amp, seed)} fill={color} />
    <path d={wavePath(w, 73, amp, seed + 0.4)} fill={color} />
  </ClipArt>
);

/* ---------- data ---------- */
const arrangeTicks = [
  "1:1:001", "1:1:481", "1:2:001", "1:2:481", "1:3:001", "1:3:481", "1:4:001", "1:4:481",
  "2:1:001", "2:1:481", "2:2:001", "2:2:481", "2:3:001", "2:3:481", "2:4:001",
];
const rollTicks = [
  "1:1:000", "1:2:000", "1:3:000", "1:4:000", "2:1:000", "2:2:000", "2:3:000", "2:4:000",
  "3:1:000", "3:2:000", "3:3:000", "3:4:000", "4:1:000",
];
const scaleMarks: [string, number][] = [
  ["0", -2], ["-3", 31], ["-6", 61], ["-12", 123], ["-20", 204], ["-30", 308],
  ["-40", 411], ["-50", 514], ["-60", 606],
];
const whiteKeys = [29, 46, 45, 46, 46, 45, 46, 45, 45, 45, 45, 45];
const blackKeys = [25, 105, 158, 238, 291, 345, 425, 477];
const blackRows = [1, 4, 6, 9, 11, 13, 16, 18];
const velocities = [609, 984, 1109, 1358, 1371, 1858];

const TIME_X = 645;
const LANE_Y = 171;

function App() {
  return (
    <Page>
      <GlobalStyle />
      <TopBar>
        <ToolGroup>
          <ToolButton><MoveIcon /></ToolButton>
          <ToolButton $active><CursorIcon /></ToolButton>
          <ToolButton><FadeIcon /></ToolButton>
        </ToolGroup>
        <ToolGroup $left={737}>
          <ToolButton><MixerIcon /></ToolButton>
          <ToolButton><InfoIcon /></ToolButton>
          <ToolButton><PadsIcon /></ToolButton>
          <ToolButton><BarsIcon /></ToolButton>
          <ToolButton><BarsIcon play /></ToolButton>
          <ToolButton><DrumIcon /></ToolButton>
          <ToolButton><ForkIcon /></ToolButton>
        </ToolGroup>
        <ToolGroup $left={798}>
          <ToolButton><FlowerIcon /></ToolButton>
          <ToolButton><ShareIcon /></ToolButton>
        </ToolGroup>
        <TopGear><FaCog size={24} /></TopGear>
      </TopBar>

      <Middle>
        <MidiStrip>
          <StripName>6 - MIDI</StripName>
          <StripTop>
            <KeyboardIcon />
            <LevelBar />
            <SelectBox $top={19}>All channels,...</SelectBox>
          </StripTop>
          <StripMixer>
            <MixerButtons>
              <MsPair $w={81} $h={40}>
                <MsKey>M</MsKey>
                <MsKey>S</MsKey>
              </MsPair>
              <RecButton $on />
            </MixerButtons>
            <PanRow><PanKnob /></PanRow>
            <StripValue $top={27} $left={84}>0</StripValue>
            <FaderArea>
              <Scale>
                {scaleMarks.map(([label, y]) => (
                  <ScaleMark key={label} $y={y}>{label}</ScaleMark>
                ))}
              </Scale>
              <Meter />
              <FaderTrack>
                <FaderRail />
                <FaderKnob />
              </FaderTrack>
            </FaderArea>
            <StripValue $top={24} $left={101}>127</StripValue>
          </StripMixer>
          <StripFoot>
            <SelectBox>Piano (Instru...</SelectBox>
          </StripFoot>
        </MidiStrip>

        <TrackColumn>
          <HeadTools>
            <ToolButton $w={60} $h={41}><ListIcon /></ToolButton>
            <HeadGear><FaCog size={24} /></HeadGear>
            <Segmented>
              <SegmentedCell><KeyboardIcon w={26} h={20} /></SegmentedCell>
              <SegmentedCell><FaPlusCircle size={26} /></SegmentedCell>
            </Segmented>
          </HeadTools>
          <TrackRow $h={140}>
            <Stripe $color="#2a8abd" />
            <TrackBody>
              <TrackTitle>
                <WaveIcon />
                <TrackName>Drums</TrackName>
                <TrackClose><FaTimes size={19} /></TrackClose>
              </TrackTitle>
              <TrackControls>
                <MsPair $w={81} $h={40}>
                  <MsKey>M</MsKey>
                  <MsKey>S</MsKey>
                </MsPair>
                <RecButton />
              </TrackControls>
            </TrackBody>
          </TrackRow>
          <TrackRow $h={140}>
            <Stripe $color="#56ad7f" />
            <TrackBody>
              <TrackTitle>
                <WaveIcon />
                <TrackName>Bass</TrackName>
              </TrackTitle>
              <TrackControls>
                <MsPair $w={81} $h={40}>
                  <MsKey>M</MsKey>
                  <MsKey>S</MsKey>
                </MsPair>
                <RecButton />
              </TrackControls>
            </TrackBody>
          </TrackRow>
          <TrackRow $h={140}>
            <Stripe $color="#6399b8" />
            <TrackBody />
          </TrackRow>
          <TrackRow>
            <Stripe $color="#1df1f1" />
            <LastTrackBody>
              <RouteBox>Don't record</RouteBox>
              <RouteBox>Built-in Output</RouteBox>
            </LastTrackBody>
          </TrackRow>
        </TrackColumn>

        <TimelineColumn>
          <Ruler>
            {arrangeTicks.map((label, i) => (
              <RulerTick key={label} $x={3 + i * 131}>
                <RulerLabel>{label}</RulerLabel>
              </RulerTick>
            ))}
            <PlayMark />
          </Ruler>
          <Lanes>
            <Clip $x={1157 - TIME_X} $y={176 - LANE_Y} $w={957} $body="#2a8abd">
              <ClipHead $color="#226f97">Karaoke Night Chorus Piano A maj var 3_44100_192000.wav</ClipHead>
              <StereoWave w={957} amp={12} color="#226f97" seed={1} />
            </Clip>
            <Clip $x={2220 - TIME_X} $y={176 - LANE_Y} $w={313} $body="#2a8abd">
              <ClipHead $color="#226f97">Karaoke Night Chorus Piano A maj var 3_44100_192000.wav</ClipHead>
              <StereoWave w={313} amp={12} color="#226f97" seed={1} />
            </Clip>
            <Clip $x={1662 - TIME_X} $y={317 - LANE_Y} $w={871} $body="#56ad7f">
              <ClipHead $color="#4a8a66">Karaoke Night Verse HiHat_44100_192000.wav</ClipHead>
              <ClipArt viewBox="0 0 871 101" preserveAspectRatio="none">
                <path d="M0 50h871" stroke="#3c7f5a" strokeWidth="2" />
                <path d="M142 46h3v8h-3zM404 46h3v8h-3zM666 46h3v8h-3z" fill="#3c7f5a" />
              </ClipArt>
            </Clip>
            <Clip $x={1861 - TIME_X} $y={457 - LANE_Y} $w={358} $body="#6399b8">
              <ClipHead $color="#4f7f9b" $pad={12}>Karaoke Night Verse Snare_44100_192000.wav</ClipHead>
              <ClipArt viewBox="0 0 358 101" preserveAspectRatio="none">
                <path d="M0 50h358" stroke="#48708a" strokeWidth="1.500" />
              </ClipArt>
            </Clip>
            <Clip $x={2220 - TIME_X} $y={457 - LANE_Y} $w={313} $body="#6399b8">
              <ClipHead $color="#4f7f9b">Karaoke Night Verse Kick_44100_192000.wav</ClipHead>
              <ClipArt viewBox="0 0 313 101" preserveAspectRatio="none">
                <path d={decayPath(0, 313, 50, 12)} fill="none" stroke="#44708c" strokeWidth="1.500" />
                <path d="M0 37h178l135 20M0 101h18L313 57" fill="none" stroke="#1fc734" strokeWidth="3" />
              </ClipArt>
            </Clip>
            <Clip $x={1861 - TIME_X} $y={597 - LANE_Y} $w={530} $body="#72d59c">
              <ClipHead $color="#60a678" />
              <ClipArt viewBox="0 0 530 101" preserveAspectRatio="none">
                <path d="M0 50h359" stroke="#4f9a6f" strokeWidth="1.500" />
                <path d={decayPath(359, 530, 50, 12)} fill="none" stroke="#4f9a6f" strokeWidth="1.500" />
              </ClipArt>
            </Clip>
            <Clip $x={1861 - TIME_X} $y={738 - LANE_Y} $w={672} $body="#327e96">
              <ClipHead $color="#2a6275" />
              <ClipArt viewBox="0 0 672 101" preserveAspectRatio="none">
                <path d="M0 50h672" stroke="#255c70" strokeWidth="1.500" />
              </ClipArt>
            </Clip>
            <Clip $x={1861 - TIME_X} $y={870 - LANE_Y} $w={672} $h={142} $body="#89c985">
              <ClipEdge />
              <ClipHead $color="#6ea06c" />
              <ClipArt viewBox="0 0 672 104" preserveAspectRatio="none">
                <path d="M330 36h342M0 43h672M330 79h342" stroke="#e6e8e3" strokeWidth="5" />
                <path d="M0 102.500h672" stroke="#f0f2ec" strokeWidth="3" />
              </ClipArt>
            </Clip>
            <Clip $x={1784 - TIME_X} $y={1019 - LANE_Y} $w={749} $body="#1fc0dc">
              <ClipHead $color="#1a9ab2" $pad={25}>Karaoke Night Verse Piano_44100_192000.wav</ClipHead>
              <StereoWave w={749} amp={11} color="#1a8fa6" seed={3} />
            </Clip>
          </Lanes>
          <HScroll>
            <HThumb $w={97} />
            <ZoomMarks>
              <span>-</span>
              <span>+</span>
            </ZoomMarks>
          </HScroll>
        </TimelineColumn>

        <VScrollColumn>
          <VExpand><ExpandIcon /></VExpand>
          <VThumb $h={971} />
          <VMarks>
            <span>-</span>
            <span>+</span>
            <VFit><FitIcon /></VFit>
          </VMarks>
        </VScrollColumn>
      </Middle>

      <Transport>
        <TransportButtons>
          <TransportKey>
            <svg width="30" height="30" viewBox="0 0 30 30" fill="currentColor"><circle cx="15" cy="15" r="15" /></svg>
          </TransportKey>
          <TransportKey>
            <svg width="34" height="36" viewBox="0 0 34 36" fill="currentColor"><path d="M0 0l34 18L0 36z" /></svg>
          </TransportKey>
          <TransportKey>
            <svg width="42" height="32" viewBox="0 0 42 32" fill="currentColor"><path d="M0 16L21 0v32zM21 16L42 0v32z" /></svg>
          </TransportKey>
          <TransportKey>
            <svg width="33" height="33" viewBox="0 0 33 33" fill="currentColor"><path d="M0 0h33v33H0z" /></svg>
          </TransportKey>
          <TransportKey><Repeat size={48} strokeWidth={3.2} /></TransportKey>
          <TransportKey>
            <svg width="26" height="26" viewBox="0 0 26 26" fill="currentColor"><circle cx="13" cy="13" r="13" /></svg>
            <BeatDigits>
              <BeatDigit $size={15}>1</BeatDigit>
              <BeatDigit $size={17}>2</BeatDigit>
              <BeatDigit $size={19}>3</BeatDigit>
              <BeatDigit $size={21}>4</BeatDigit>
            </BeatDigits>
          </TransportKey>
        </TransportButtons>
        <Display>
          <MuteCell><MuteIcon /></MuteCell>
          <TimeCell>3:2:789</TimeCell>
          <InfoCell $size={18}>Start</InfoCell>
          <InfoCell $size={18}>End</InfoCell>
          <InfoCell $size={18}>1:4:658</InfoCell>
          <InfoCell $size={18}>1:4:658</InfoCell>
          <TallCell $big>Grid</TallCell>
          <InfoCell $dim $size={18}>Bpm</InfoCell>
          <InfoCell $size={18}>85</InfoCell>
          <InfoCell><Arrow /></InfoCell>
          <InfoCell><Arrow $down /></InfoCell>
          <TallCell><MetronomeIcon /></TallCell>
          <InfoCell $size={16}>4</InfoCell>
          <InfoCell $size={16}>4</InfoCell>
          <TallCell><NoteClockIcon /></TallCell>
        </Display>
      </Transport>

      <PianoWindow>
        <WinHead>
          <TitleRow>
            <WinTitle>Pianoroll</WinTitle>
            <WinHelp>
              <FaQuestionCircle size={22} />
              <FaTimesCircle size={22} />
            </WinHelp>
          </TitleRow>
          <WinTools>
            <Radio $on />
            <RadioLabel $w={84}>Song</RadioLabel>
            <Radio />
            <RadioLabel $w={116}>Part</RadioLabel>
            <WinToolGroup>
              <ToolButton $w={58} $h={48}><CursorIcon w={20} h={30} /></ToolButton>
              <ToolButton $w={58} $h={48} $active><NoteIcon /></ToolButton>
              <ToolButton $w={58} $h={48}><EraserIcon /></ToolButton>
              <ToolButton $w={58} $h={48}><BrushIcon /></ToolButton>
            </WinToolGroup>
            <WinToolGroup $left={35}>
              <ToolButton $w={58} $h={48}><CopyIcon /></ToolButton>
              <ToolButton $w={58} $h={48}><ScissorsIcon /></ToolButton>
              <ToolButton $w={58} $h={48}><PasteIcon /></ToolButton>
            </WinToolGroup>
            <InfoTable>
              <InfoCell $dim>Instrument</InfoCell>
              <BeatCell>Beat</BeatCell>
              <InfoCell $dim>Note length</InfoCell>
              <InfoCell $dim>Velocity</InfoCell>
              <InfoCell><Arrow /></InfoCell>
              <InfoCell $dim>Part</InfoCell>
              <InfoCell><Arrow /></InfoCell>
              <InfoCell $size={19}>Piano (Instrume...</InfoCell>
              <InfoCell $weight={600}>Linked to grid</InfoCell>
              <InfoCell $weight={600}>127</InfoCell>
              <InfoCell><Arrow $down /></InfoCell>
              <InfoCell $weight={600}>1</InfoCell>
              <InfoCell><Arrow $down /></InfoCell>
            </InfoTable>
            <WinToolGroup $left={45} $gap={36}>
              <ToolButton $w={58} $h={48}><NoteDotsIcon /></ToolButton>
              <WinToolGroup>
                <ToolButton $w={58} $h={48}><NoteGearIcon /></ToolButton>
                <ToolButton $w={58} $h={48}><FaCog size={34} /></ToolButton>
              </WinToolGroup>
            </WinToolGroup>
          </WinTools>
        </WinHead>
        <WinBody>
          <WinMain>
            <RollRow>
              <KeysColumn>
                <KeyArrow $h={25}><Arrow $size={13} $color="#84888a" /></KeyArrow>
                <Keys>
                  {whiteKeys.map((h, i) => (
                    <WhiteKey key={i} $h={h} />
                  ))}
                  {blackKeys.map((y) => (
                    <BlackKey key={y} $y={y} />
                  ))}
                  <OctaveName $y={178}>C10</OctaveName>
                  <OctaveName $y={494}>C9</OctaveName>
                </Keys>
                <KeyArrow $h={29}><Arrow $down $size={13} $color="#84888a" /></KeyArrow>
              </KeysColumn>
              <GridColumn>
                <WinRuler>
                  {rollTicks.map((label, i) => (
                    <WinTick key={label} $x={2 + i * 125}>
                      <WinTickLabel>{label}</WinTickLabel>
                    </WinTick>
                  ))}
                  <Marker $x={832 - 371} $color="#62bdf5" />
                  <Marker $x={1600 - 371} $color="#f1bb57" />
                </WinRuler>
                <RollGrid>
                  <RollLanes>
                    {Array.from({ length: 21 }).map((_, i) => (
                      <RollLane key={i} $dark={blackRows.includes(i)} $line={i === 7 || i === 19} />
                    ))}
                  </RollLanes>
                  <BeatLines />
                  <Note $x={736} $y={78} $w={500} />
                  <Note $x={1000} $y={290} $w={247} $h={26} $sel />
                  <Note $x={612} $y={449} $w={375} />
                  <Note $x={987} $y={529} $w={124} $h={13} />
                  <Note $x={1487} $y={369} $w={25} />
                  <PlayLine $x={1228} />
                </RollGrid>
                <RollBar>
                  <HThumb $w={1260} />
                  <ZoomMarks>
                    <span>-</span>
                    <span>+</span>
                  </ZoomMarks>
                </RollBar>
              </GridColumn>
              <RollScroll>
                <RollExpand $h={25}><ExpandIcon /></RollExpand>
                <RollScrollBody>
                  <VThumb $h={72} />
                  <RollMarks>
                    <span>-</span>
                    <span>+</span>
                  </RollMarks>
                </RollScrollBody>
                <RollExpand $h={29} $bg="#3b3f41"><FitIcon /></RollExpand>
              </RollScroll>
            </RollRow>
            <VelRow>
              <VelTools>
                <ToolButton $w={57} $h={46}><PencilCurveIcon /></ToolButton>
                <ToolButton $w={57} $h={46}><GearPencilIcon /></ToolButton>
              </VelTools>
              <VelLane>
                <VelLabel>VELOCITY</VelLabel>
                {velocities.map((x, i) => (
                  <VelStem key={x} $x={x - 371} $fade={i === 0} />
                ))}
              </VelLane>
            </VelRow>
            <WinFoot />
          </WinMain>
          <SidePanel>
            <PartLane>
              <PartNumber>6</PartNumber>
              <PartFill />
            </PartLane>
          </SidePanel>
        </WinBody>
      </PianoWindow>
    </Page>
  );
}

export default App;
